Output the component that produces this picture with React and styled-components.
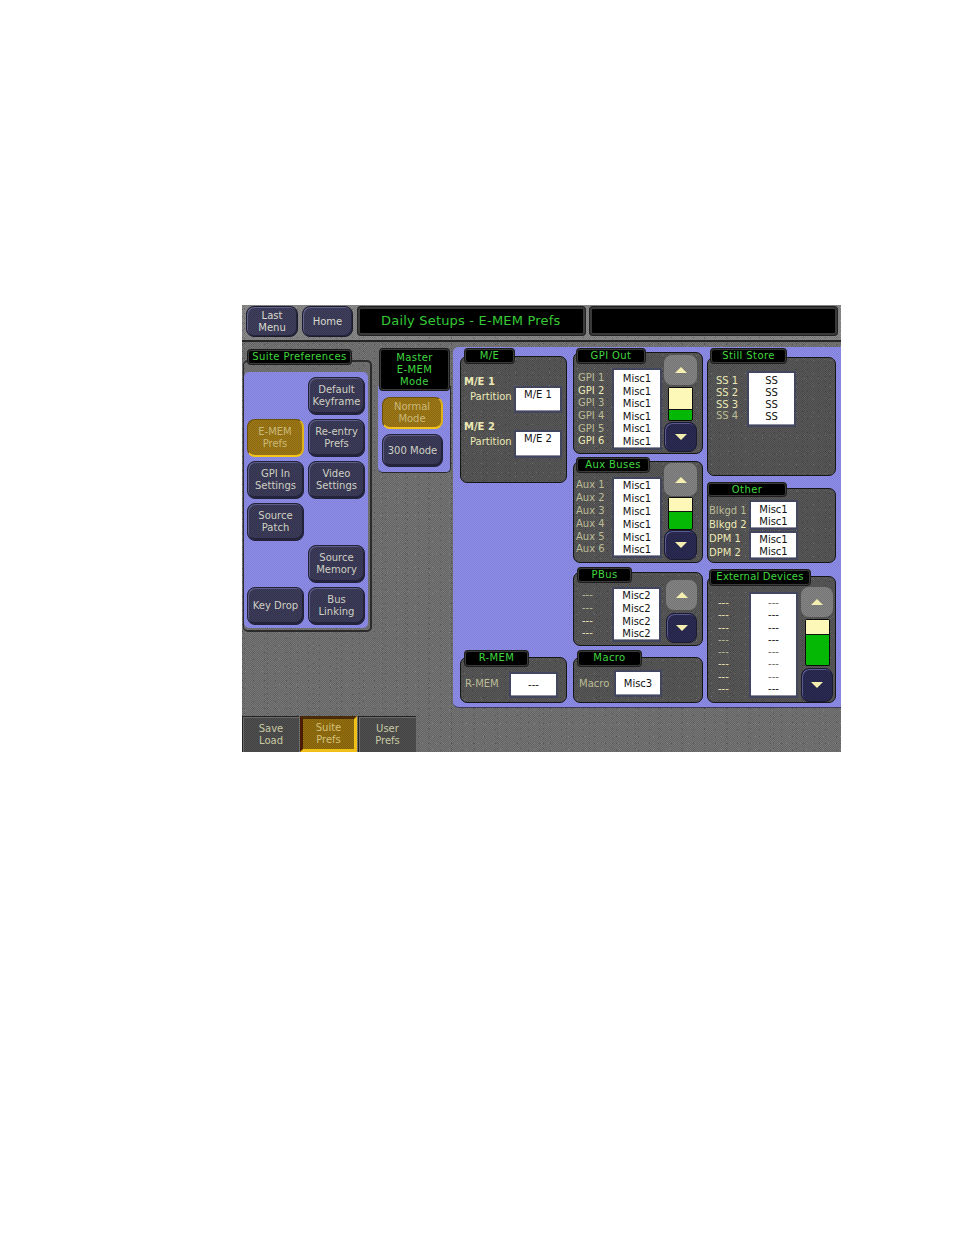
import React from "react";
import styled, { createGlobalStyle, css } from "styled-components";

const Global = createGlobalStyle`
  html, body { margin: 0; padding: 0; background: #fff; }
  body { font-family: "DejaVu Sans", Verdana, sans-serif; font-size: 10px; }
  * { box-sizing: border-box; }
`;

const dither = (a, b) => css`
  background-color: ${a};
  background-image:
    radial-gradient(circle at 0.5px 0.5px, rgba(200,200,200,.28) 0.6px, transparent 0.8px),
    radial-gradient(circle at 0.5px 0.5px, rgba(15,15,15,.3) 0.6px, transparent 0.8px),
    radial-gradient(circle at 0.5px 0.5px, rgba(190,190,190,.2) 0.6px, transparent 0.8px),
    radial-gradient(circle at 0.5px 0.5px, rgba(15,15,15,.25) 0.6px, transparent 0.8px),
    repeating-conic-gradient(${a} 0 25%, ${b} 0 50%);
  background-size: 17px 13px, 11px 7px, 7px 19px, 23px 5px, 2px 2px;
  background-position: 3px 2px, 0 4px, 5px 1px, 2px 3px, 0 0;
`;
const flat = (a, b) => css`
  background-color: ${a};
  background-image: repeating-conic-gradient(${a} 0 25%, ${b} 0 50%);
  background-size: 2px 2px;
`;
const purple = flat("#8e8ee6", "#8080da");

const Page = styled.div`
  padding: 305px 0 0 242px;
  width: 954px;
  height: 1235px;
  background: #fff;
`;
const Screen = styled.div`
  width: 599px;
  height: 447px;
  display: flex;
  flex-direction: column;
  overflow: hidden;
  ${dither("#767676", "#646464")}
`;
const TopBar = styled.div`
  height: 37px;
  flex: none;
  display: flex;
  gap: 4px;
  padding: 1px 3px 0 4px;
  border-bottom: 2px solid #262626;
  ${dither("#8c8c8c", "#787878")}
`;
const NavButton = styled.div`
  width: ${(p) => p.$w}px;
  height: 31px;
  border-radius: 8px;
  display: flex;
  align-items: center;
  justify-content: center;
  text-align: center;
  line-height: 12px;
  color: #d8d8cc;
  border: 1px solid #1b1b2a;
  box-shadow: inset 1px 1px 0 #63638f, inset -1px -1px 0 #24243c;
  ${flat("#41415f", "#34344e")}
`;
const TitleBar = styled.div`
  width: ${(p) => p.$w}px;
  height: 30px;
  margin-left: ${(p) => p.$ml || 0}px;
  background: #000;
  border: 3px solid #3a3a3a;
  outline: 1px solid #222;
  outline-offset: -1px;
  border-radius: 4px;
  color: #35c935;
  font-size: 13px;
  line-height: 24px;
  padding-left: 21px;
  letter-spacing: 0.2px;
`;
const Body = styled.div`
  flex: 1;
  display: flex;
  align-items: flex-start;
  padding: 5px 0 0 1px;
`;
const SuiteCol = styled.div`
  width: 129px;
  margin-top: 2px;
  display: flex;
  flex-direction: column;
`;
const Tab = styled.div`
  position: relative;
  z-index: 1;
  flex: none;
  width: ${(p) => p.$w}px;
  height: ${(p) => p.$h || 16}px;
  margin-left: ${(p) => p.$x || 0}px;
  margin-bottom: ${(p) => -(p.$over || 0)}px;
  background: #000;
  border: 2px solid #3b3b3b;
  outline: 1px solid #1c1c1c;
  outline-offset: -1px;
  border-radius: 4px;
  color: #3fd63f;
  font-size: 10px;
  line-height: 11px;
  text-align: center;
  white-space: nowrap;
  letter-spacing: ${(p) => p.$ls ?? 0.4}px;
`;
const SuiteFrame = styled.div`
  height: 272px;
  padding: 10px 2px 2px 0;
  border: 2px solid #2b2b2b;
  border-left-width: 1px;
  border-radius: 5px;
`;
const SuitePanel = styled.div`
  height: 100%;
  border-radius: 5px;
  padding: 5px 0 0 3px;
  display: grid;
  grid-template-columns: 57px 57px;
  grid-auto-rows: 38px;
  gap: 4px;
  ${purple}
`;
const Key = styled.div`
  grid-column: ${(p) => p.$col};
  grid-row: ${(p) => p.$row};
  height: ${(p) => p.$h || 38}px;
  border-radius: 8px;
  display: flex;
  align-items: center;
  justify-content: center;
  text-align: center;
  line-height: 12px;
  ${(p) =>
    p.$on
      ? css`
          color: #c9b878;
          border: 1px solid #6b5008;
          border-bottom: 2px solid #f4c61c;
          border-right: 2px solid #e0b018;
          ${flat("#a07a18", "#8a6810")}
        `
      : css`
          color: #cfcfc2;
          border: 1px solid #22223a;
          box-shadow: inset 1px 1px 0 #5d5d88, inset -1px -2px 0 #23233b;
          ${flat("#3e3e5c", "#32324c")}
        `}
`;
const MasterCol = styled.div`
  width: 73px;
  margin: 1px 0 0 6px;
  display: flex;
  flex-direction: column;
`;
const MasterTab = styled(Tab)`
  width: 71px;
  height: 43px;
  margin-left: 1px;
  font-size: 10px;
  line-height: 12px;
  padding-top: 2px;
  letter-spacing: 0.4px;
`;
const MasterPanel = styled.div`
  height: 87px;
  margin-top: -5px;
  padding: 11px 0 0 4px;
  border-radius: 0 0 5px 5px;
  display: flex;
  flex-direction: column;
  gap: 5px;
  border-right: 1px solid #2a2a2a;
  border-bottom: 1px solid #2a2a2a;
  ${purple}
`;
const ModeKey = styled(Key)`
  width: 61px;
`;
const Main = styled.div`
  width: 388px;
  height: 361px;
  margin-left: 2px;
  padding: 1px 5px 0 7px;
  border-radius: 6px 0 0 6px;
  display: flex;
  gap: 6px;
  border-bottom: 1px solid #3c3c5c;
  ${purple}
`;
const Col = styled.div`
  width: ${(p) => p.$w}px;
  margin-left: ${(p) => p.$ml || 0}px;
  flex: none;
  display: flex;
  flex-direction: column;
`;
const Group = styled.div`
  display: flex;
  flex-direction: column;
  margin-top: ${(p) => p.$top || 0}px;
`;
const Box = styled.div`
  height: ${(p) => p.$h}px;
  display: flex;
  align-items: flex-start;
  border: 1px solid #161616;
  border-radius: 7px;
  ${dither("#5a5a5a", "#4a4a4a")}
`;
const Labels = styled.div`
  flex: none;
  width: ${(p) => p.$w}px;
  margin: ${(p) => p.$top}px 0 0 ${(p) => p.$left}px;
  line-height: ${(p) => p.$pitch}px;
`;
const Label = styled.div`
  height: ${(p) => p.$pitch}px;
  white-space: nowrap;
  color: ${(p) => (p.$dim ? "#bcbc96" : "#ece9b6")};
`;
const Field = styled.div`
  flex: none;
  width: ${(p) => p.$w}px;
  height: ${(p) => p.$h}px;
  margin-top: ${(p) => p.$top || 0}px;
  border: 2px solid #43465f;
  background: #fff;
  box-shadow: inset 0 -1px 0 #8d8f9f;
  color: #111;
  text-align: center;
  line-height: ${(p) => p.$pitch}px;
  padding-top: ${(p) => p.$pad || 0}px;
  overflow: hidden;
`;
const Item = styled.div`
  height: ${(p) => p.$pitch}px;
  color: ${(p) => (p.$dim ? "#666" : "#111")};
  white-space: nowrap;
`;
const Scroller = styled.div`
  flex: none;
  width: ${(p) => p.$w || 33}px;
  margin: ${(p) => p.$top}px 0 0 ${(p) => p.$left}px;
  display: flex;
  flex-direction: column;
`;
const ArrowBtn = styled.div`
  height: ${(p) => p.$h}px;
  margin-top: ${(p) => p.$top || 0}px;
  border-radius: 8px;
  display: flex;
  align-items: center;
  justify-content: center;
  ${(p) =>
    p.$down
      ? css`
          border: 1px solid #1a1a30;
          box-shadow: inset 1px 1px 0 #5a5a90;
          ${flat("#2b2b55", "#242447")}
        `
      : css`
          ${flat("#858585", "#747474")}
        `}
`;
const Track = styled.div`
  width: 25px;
  height: ${(p) => p.$h}px;
  margin: ${(p) => p.$top}px 0 0 4px;
  border: 1px solid #0b0b0b;
  border-radius: 2px;
  background: #05b805;
  display: flex;
  flex-direction: column;
`;
const Thumb = styled.div`
  height: ${(p) => p.$h}px;
  flex: none;
  background: #fdf8b8;
  border-bottom: 1px solid #111;
`;
const MeWrap = styled.div`
  padding: 19px 0 0 3px;
  display: flex;
  flex-direction: column;
`;
const MeBlock = styled.div`
  height: ${(p) => p.$h}px;
  display: flex;
  align-items: flex-start;
`;
const MeText = styled.div`
  width: 50px;
  flex: none;
`;
const MeHead = styled.div`
  font-weight: bold;
  color: #ece9b6;
  line-height: 12px;
`;
const MePart = styled.div`
  color: #ece9b6;
  line-height: 12px;
  margin: 3px 0 0 6px;
  white-space: nowrap;
`;
const Stack = styled.div`
  flex: none;
  margin-top: 11px;
  display: flex;
  flex-direction: column;
  gap: 1px;
`;
const TabBar = styled.div`
  height: 36px;
  flex: none;
  display: flex;
  gap: 1px;
`;
const BottomTab = styled.div`
  width: ${(p) => p.$w}px;
  display: flex;
  align-items: center;
  justify-content: center;
  text-align: center;
  line-height: 12px;
  border-top: 1px solid #222;
  ${(p) =>
    p.$on
      ? css`
          color: #d4c078;
          border-left: 3px solid #4a1c08;
          border-top: 3px solid #4a2c08;
          border-right: 3px solid #f0c018;
          border-bottom: 3px solid #f0c018;
          ${flat("#94700f", "#7f5f0c")}
        `
      : css`
          color: #c8c8a4;
          border-left: 1px solid #222;
          box-shadow: inset 1px 1px 0 #6a6a6a;
          ${flat("#505050", "#424242")}
        `}
`;

const Tri = ({ down }) => (
  <svg width="12" height="6" viewBox="0 0 12 6">
    <polygon points={down ? "0,0 12,0 6,6" : "6,0 12,6 0,6"} fill="#f4eeb0" />
  </svg>
);

const lines = (arr, pitch) =>
  arr.map((t, i) => {
    const [text, dim] = Array.isArray(t) ? t : [t, false];
    return (
      <Label key={i} $pitch={pitch} $dim={dim}>
        {text}
      </Label>
    );
  });
const items = (arr, pitch) =>
  arr.map((t, i) => {
    const [text, dim] = Array.isArray(t) ? t : [t, false];
    return (
      <Item key={i} $pitch={pitch} $dim={dim}>
        {text}
      </Item>
    );
  });
const two = (s) => (
  <span>
    {s[0]}
    <br />
    {s[1]}
  </span>
);

const misc1 = Array(6).fill("Misc1");

export default function App() {
  return (
    <Page>
      <Global />
      <Screen>
        <TopBar>
          <NavButton $w={52}>{two(["Last", "Menu"])}</NavButton>
          <NavButton $w={51}>Home</NavButton>
          <TitleBar $w={229}>Daily Setups - E-MEM Prefs</TitleBar>
          <TitleBar $w={249} $ml={-1} />
        </TopBar>
        <Body>
          <SuiteCol>
            <Tab $w={105} $x={4} $over={5} $h={16}>
              Suite Preferences
            </Tab>
            <SuiteFrame>
              <SuitePanel>
                <Key $col={2} $row={1}>{two(["Default", "Keyframe"])}</Key>
                <Key $col={1} $row={2} $on>{two(["E-MEM", "Prefs"])}</Key>
                <Key $col={2} $row={2}>{two(["Re-entry", "Prefs"])}</Key>
                <Key $col={1} $row={3}>{two(["GPI In", "Settings"])}</Key>
                <Key $col={2} $row={3}>{two(["Video", "Settings"])}</Key>
                <Key $col={1} $row={4}>{two(["Source", "Patch"])}</Key>
                <Key $col={2} $row={5}>{two(["Source", "Memory"])}</Key>
                <Key $col={1} $row={6}>Key Drop</Key>
                <Key $col={2} $row={6}>{two(["Bus", "Linking"])}</Key>
              </SuitePanel>
            </SuiteFrame>
          </SuiteCol>
          <MasterCol>
            <MasterTab>
              Master
              <br />
              E-MEM
              <br />
              Mode
            </MasterTab>
            <MasterPanel>
              <ModeKey $on $h={32}>{two(["Normal", "Mode"])}</ModeKey>
              <ModeKey $h={33}>300 Mode</ModeKey>
            </MasterPanel>
          </MasterCol>
          <Main>
            <Col $w={107}>
              <Group>
                <Tab $w={51} $x={4} $over={8}>M/E</Tab>
                <Box $h={127}>
                  <MeWrap>
                    <MeBlock $h={45}>
                      <MeText>
                        <MeHead>M/E 1</MeHead>
                        <MePart>Partition</MePart>
                      </MeText>
                      <Field $w={48} $h={27} $top={10} $pitch={14}>M/E 1</Field>
                    </MeBlock>
                    <MeBlock $h={40}>
                      <MeText>
                        <MeHead>M/E 2</MeHead>
                        <MePart>Partition</MePart>
                      </MeText>
                      <Field $w={48} $h={28} $top={9} $pitch={14}>M/E 2</Field>
                    </MeBlock>
                  </MeWrap>
                </Box>
              </Group>
              <Group $top={167}>
                <Tab $w={65} $x={4} $h={17} $over={10}>R-MEM</Tab>
                <Box $h={46}>
                  <Labels $w={44} $top={20} $left={4} $pitch={12}>
                    {lines([["R-MEM", true]], 12)}
                  </Labels>
                  <Field $w={49} $h={26} $top={14} $pitch={22}>---</Field>
                </Box>
              </Group>
            </Col>
            <Col $w={130}>
              <Group>
                <Tab $w={70} $x={3} $over={12}>GPI Out</Tab>
                <Box $h={102}>
                  <Labels $w={34} $top={19} $left={4} $pitch={12.7}>
                    {lines([["GPI 1", true], "GPI 2", ["GPI 3", true], ["GPI 4", true], ["GPI 5", true], "GPI 6"], 12.7)}
                  </Labels>
                  <Field $w={50} $h={82} $top={15} $pitch={12.6} $pad={3}>{items(misc1, 12.6)}</Field>
                  <Scroller $top={2} $left={2}>
                    <ArrowBtn $h={30}><Tri /></ArrowBtn>
                    <Track $h={34} $top={2}><Thumb $h={22} /></Track>
                    <ArrowBtn $h={30} $top={1} $down><Tri down /></ArrowBtn>
                  </Scroller>
                </Box>
              </Group>
              <Group $top={3}>
                <Tab $w={74} $x={3} $over={12}>Aux Buses</Tab>
                <Box $h={102}>
                  <Labels $w={36} $top={17} $left={2} $pitch={12.9}>
                    {lines([["Aux 1", true], ["Aux 2", true], ["Aux 3", true], ["Aux 4", true], ["Aux 5", true], ["Aux 6", true]], 12.9)}
                  </Labels>
                  <Field $w={50} $h={81} $top={15} $pitch={12.9} $pad={1}>{items(misc1, 12.9)}</Field>
                  <Scroller $top={1} $left={2}>
                    <ArrowBtn $h={33}><Tri /></ArrowBtn>
                    <Track $h={33} $top={1}><Thumb $h={14} /></Track>
                    <ArrowBtn $h={30} $down><Tri down /></ArrowBtn>
                  </Scroller>
                </Box>
              </Group>
              <Group $top={4}>
                <Tab $w={55} $x={4} $over={11}>PBus</Tab>
                <Box $h={74}>
                  <Labels $w={30} $top={16} $left={8} $pitch={12.8}>
                    {lines([["---", true], ["---", true], "---", "---"], 12.8)}
                  </Labels>
                  <Field $w={49} $h={55} $top={14} $pitch={12.8} $pad={1}>{items(Array(4).fill("Misc2"), 12.8)}</Field>
                  <Scroller $w={31} $top={7} $left={5}>
                    <ArrowBtn $h={30}><Tri /></ArrowBtn>
                    <ArrowBtn $h={30} $top={3} $down><Tri down /></ArrowBtn>
                  </Scroller>
                </Box>
              </Group>
              <Group $top={4}>
                <Tab $w={65} $x={4} $h={17} $over={10}>Macro</Tab>
                <Box $h={46}>
                  <Labels $w={35} $top={20} $left={5} $pitch={12}>
                    {lines([["Macro", true]], 12)}
                  </Labels>
                  <Field $w={48} $h={27} $top={12} $pitch={23}>Misc3</Field>
                </Box>
              </Group>
            </Col>
            <Col $w={129} $ml={-2}>
              <Group>
                <Tab $w={77} $x={3} $over={7}>Still Store</Tab>
                <Box $h={119}>
                  <Labels $w={31} $top={17} $left={8} $pitch={11.8}>
                    {lines(["SS 1", "SS 2", "SS 3", ["SS 4", true]], 11.8)}
                  </Labels>
                  <Field $w={49} $h={56} $top={13} $pitch={12} $pad={2}>{items(Array(4).fill("SS"), 12)}</Field>
                </Box>
              </Group>
              <Group $top={6}>
                <Tab $w={80} $h={15} $over={9}>Other</Tab>
                <Box $h={75}>
                  <Labels $w={40} $top={15} $left={1} $pitch={14}>
                    {lines([["Blkgd 1", true], "Blkgd 2", "DPM 1", "DPM 2"], 14)}
                  </Labels>
                  <Stack>
                    <Field $w={49} $h={30} $pitch={12} $pad={2}>{items(["Misc1", "Misc1"], 12)}</Field>
                    <Field $w={49} $h={29} $pitch={12} $pad={1}>{items(["Misc1", "Misc1"], 12)}</Field>
                  </Stack>
                </Box>
              </Group>
              <Group $top={6}>
                <Tab $w={102} $x={2} $h={17} $over={10} $ls={0.2}>External Devices</Tab>
                <Box $h={127}>
                  <Labels $w={31} $top={20} $left={10} $pitch={12.3}>
                    {lines(["---", "---", "---", ["---", true], ["---", true], "---", "---", "---"], 12.3)}
                  </Labels>
                  <Field $w={49} $h={106} $top={15} $pitch={12.3} $pad={3}>
                    {items([["---", true], "---", "---", "---", ["---", true], ["---", true], ["---", true], "---"], 12.3)}
                  </Field>
                  <Scroller $w={32} $top={10} $left={3}>
                    <ArrowBtn $h={30}><Tri /></ArrowBtn>
                    <Track $h={47} $top={2}><Thumb $h={15} /></Track>
                    <ArrowBtn $h={34} $top={2} $down><Tri down /></ArrowBtn>
                  </Scroller>
                </Box>
              </Group>
            </Col>
          </Main>
        </Body>
        <TabBar>
          <BottomTab $w={57}>{two(["Save", "Load"])}</BottomTab>
          <BottomTab $w={57} $on>{two(["Suite", "Prefs"])}</BottomTab>
          <BottomTab $w={58}>{two(["User", "Prefs"])}</BottomTab>
        </TabBar>
      </Screen>
    </Page>
  );
}
